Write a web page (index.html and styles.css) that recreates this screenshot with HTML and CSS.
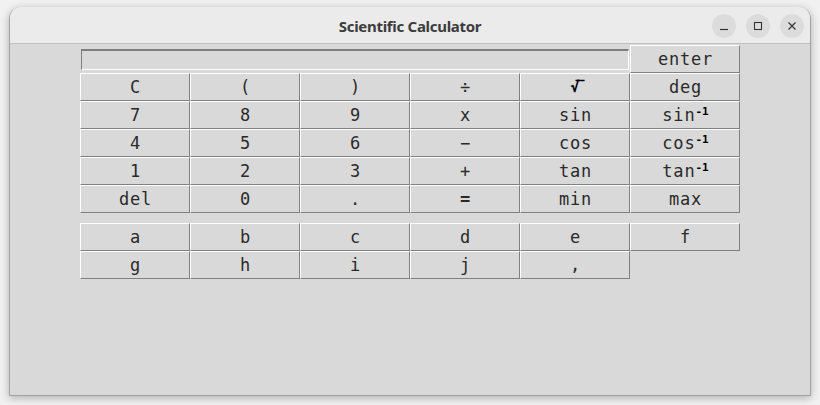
FILE: index.html
```html
<!DOCTYPE html>
<html>
<head>
<meta charset="utf-8">
<link rel="stylesheet" href="styles.css">
</head>
<body>
<div class="window">
  <div class="titlebar">
    <div class="title">Scientific Calculator</div>
    <div class="controls">
      <span class="ctl"><svg width="10" height="10" viewBox="0 0 10 10"><path d="M1 8.5H9" stroke="#333" stroke-width="1.2"/></svg></span>
      <span class="ctl"><svg width="10" height="10" viewBox="0 0 10 10"><rect x="1.5" y="1.5" width="7" height="7" fill="none" stroke="#333" stroke-width="1.1"/></svg></span>
      <span class="ctl"><svg width="10" height="10" viewBox="0 0 10 10"><path d="M1.5 1.5L8.5 8.5M8.5 1.5L1.5 8.5" stroke="#333" stroke-width="1.2"/></svg></span>
    </div>
  </div>
  <div class="content">
    <div class="keys">
      <div class="entry-cell"><div class="entry"></div></div>
      <div class="btn">enter</div>
      <div class="btn">C</div><div class="btn">(</div><div class="btn">)</div><div class="btn">÷</div><div class="btn sqrt">√‾</div><div class="btn">deg</div>
      <div class="btn">7</div><div class="btn">8</div><div class="btn">9</div><div class="btn">x</div><div class="btn">sin</div><div class="btn">sin<b class="sup">-1</b></div>
      <div class="btn">4</div><div class="btn">5</div><div class="btn">6</div><div class="btn">−</div><div class="btn">cos</div><div class="btn">cos<b class="sup">-1</b></div>
      <div class="btn">1</div><div class="btn">2</div><div class="btn">3</div><div class="btn">+</div><div class="btn">tan</div><div class="btn">tan<b class="sup">-1</b></div>
      <div class="btn">del</div><div class="btn">0</div><div class="btn">.</div><div class="btn eq">=</div><div class="btn">min</div><div class="btn">max</div>
    </div>
    <div class="keys letters">
      <div class="btn">a</div><div class="btn">b</div><div class="btn">c</div><div class="btn">d</div><div class="btn">e</div><div class="btn">f</div>
      <div class="btn">g</div><div class="btn">h</div><div class="btn">i</div><div class="btn">j</div><div class="btn">,</div>
    </div>
  </div>
</div>
</body>
</html>
```
FILE: styles.css
```css
html, body {
  margin: 0;
  padding: 0;
}
body {
  width: 820px;
  height: 405px;
  background: #f1f1f1;
  padding: 7px 0 0 9px;
  box-sizing: border-box;
  overflow: hidden;
}
.window {
  width: 802px;
  height: 389px;
  box-sizing: border-box;
  border: 1px solid #a2a2a2;
  border-top: none;
  border-radius: 12px 12px 0 0;
  background: #d9d9d9;
  box-shadow: 0 2px 9px rgba(0, 0, 0, 0.28);
  display: flex;
  flex-direction: column;
}
.titlebar {
  height: 37px;
  box-sizing: border-box;
  background: #ebebeb;
  border-bottom: 1px solid #bfbfbf;
  border-radius: 11px 11px 0 0;
  position: relative;
  display: flex;
  align-items: center;
  justify-content: center;
}
.title {
  font-family: "Noto Sans", sans-serif;
  font-weight: 700;
  font-size: 15px;
  letter-spacing: -0.3px;
  color: #3c3c3c;
  padding-top: 2px;
}
.controls {
  position: absolute;
  right: 6px;
  top: 7px;
  display: flex;
  gap: 10px;
}
.ctl {
  width: 24px;
  height: 24px;
  border-radius: 50%;
  background: #dcdcdc;
  display: flex;
  align-items: center;
  justify-content: center;
}
.content {
  flex: 1;
  padding: 1px 0 0 70px;
  display: flex;
  flex-direction: column;
  gap: 10px;
}
.keys {
  display: grid;
  grid-template-columns: repeat(6, 110px);
  grid-auto-rows: 28px;
}
.entry-cell {
  grid-column: span 5;
  padding: 4px 1px 3px 1px;
}
.entry {
  height: 100%;
  box-sizing: border-box;
  border: 1px solid #ffffff;
  border-top: 2px solid #7e7e7e;
  border-left: 1px solid #7e7e7e;
  background: #d9d9d9;
}
.btn {
  box-sizing: border-box;
  border: 1px solid #808080;
  border-top-color: #ffffff;
  border-left-color: #ffffff;
  background: #d9d9d9;
  display: flex;
  align-items: center;
  justify-content: center;
  font-family: "DejaVu Sans Mono", monospace;
  font-size: 17px;
  letter-spacing: 0.8px;
  padding-left: 1px;
  color: #2a2a2a;
  white-space: nowrap;
}
.sup {
  font-size: 11px;
  font-weight: 700;
  letter-spacing: 0;
  align-self: flex-start;
  margin-top: 3px;
  color: #000;
}
.sqrt {
  font-weight: 700;
  font-size: 15px;
  letter-spacing: -4px;
  color: #000;
}
.eq {
  font-weight: 700;
}
```
